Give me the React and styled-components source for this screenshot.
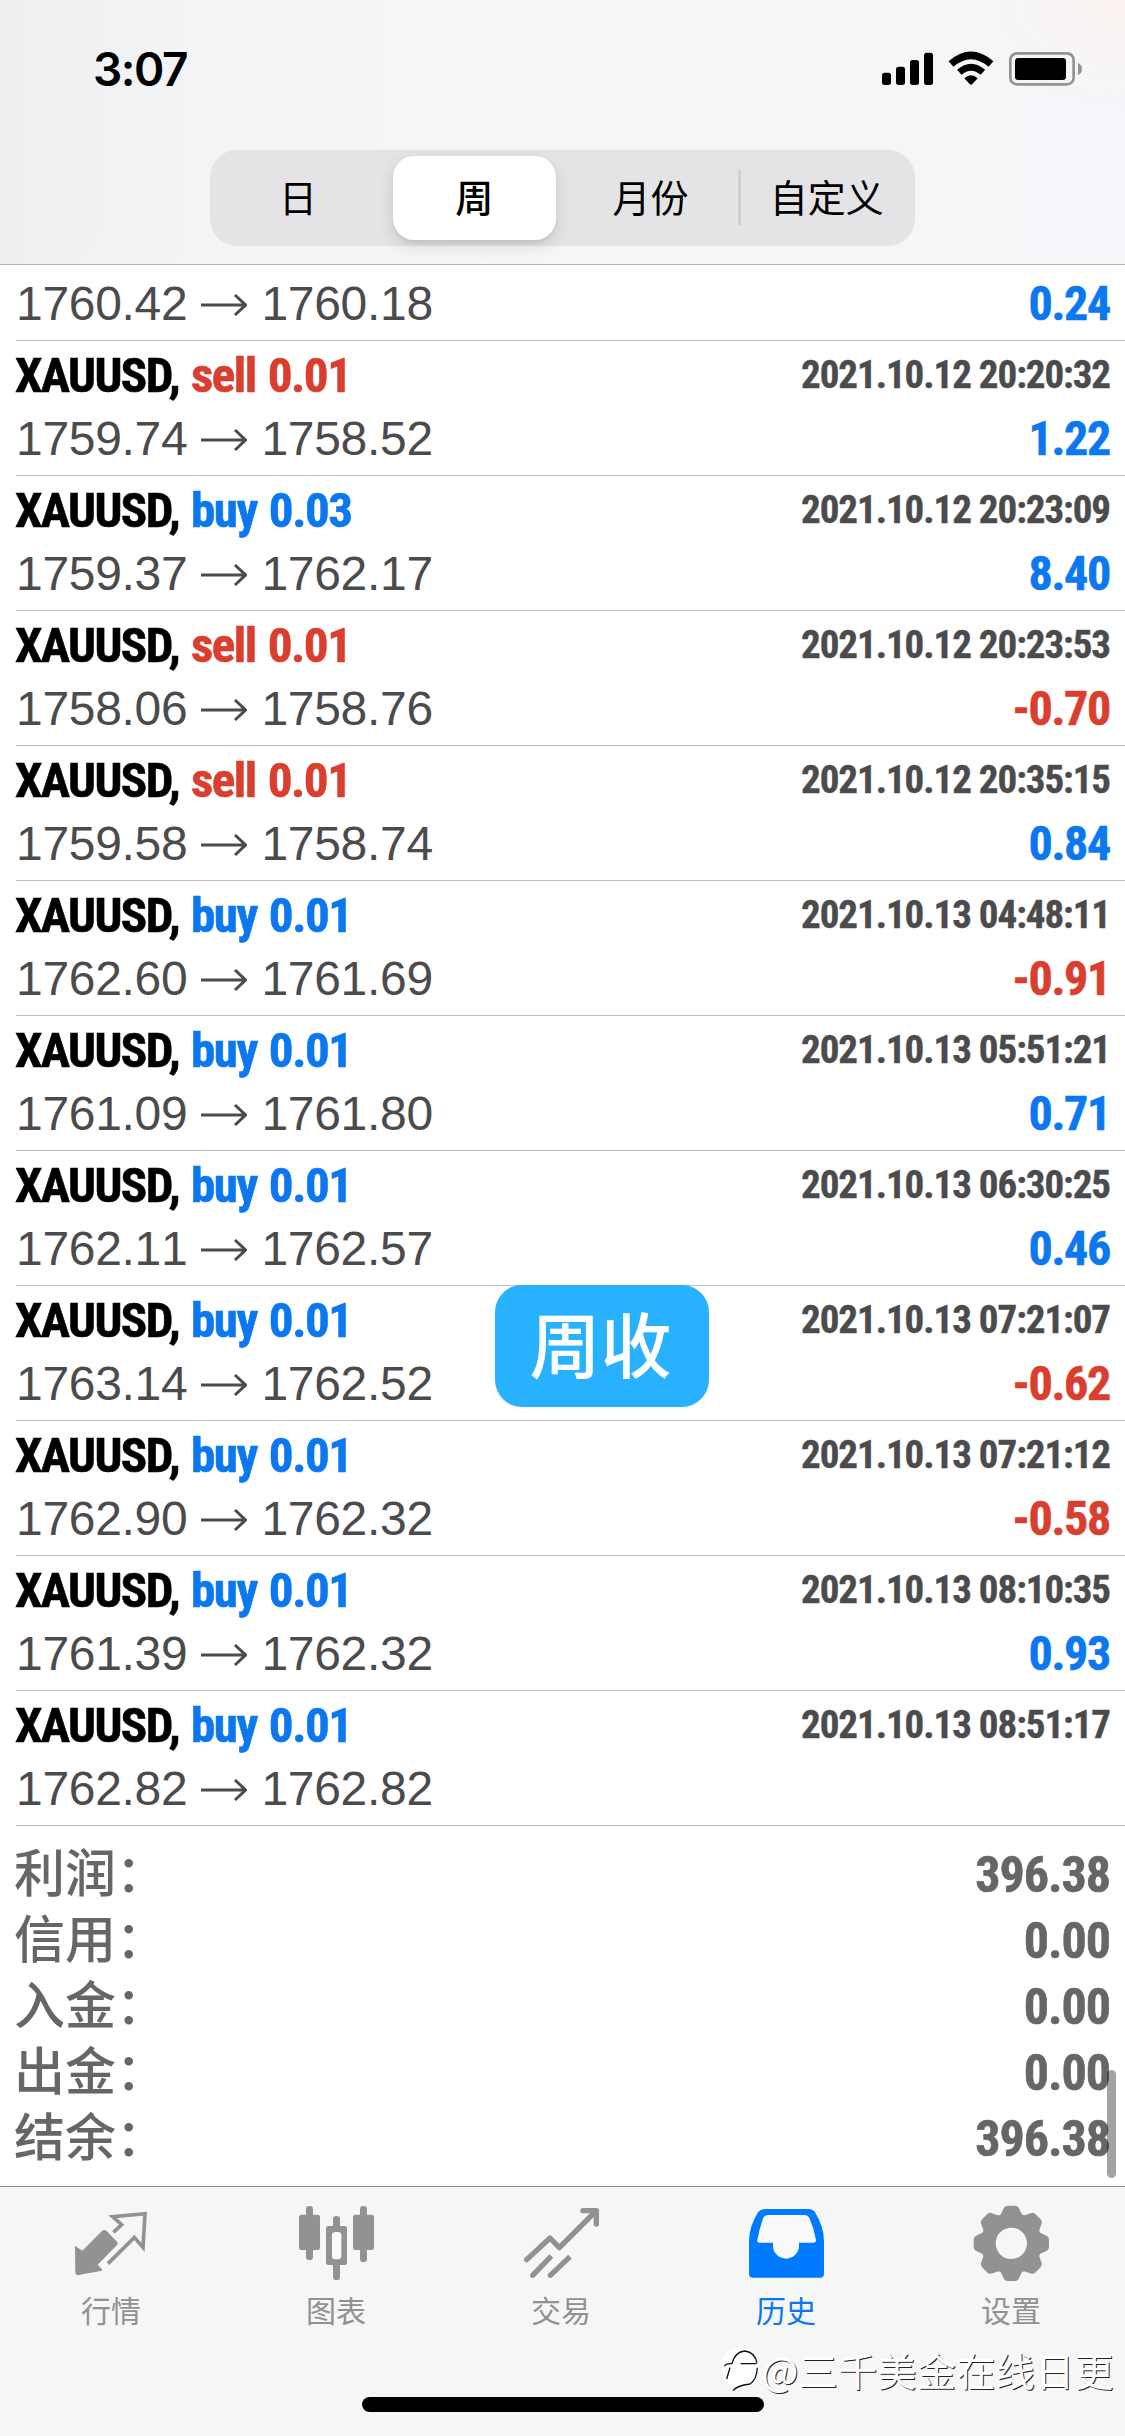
import React from 'react';
import styled, { createGlobalStyle } from 'styled-components';

const cjk = '"Noto Sans CJK SC", sans-serif';
const narrow = '"Roboto Condensed", Roboto, "Noto Sans CJK SC", sans-serif';
const colors = { blue: '#0b78f0', red: '#d93e2e', ink: '#4b4b4e' };

const GlobalStyle = createGlobalStyle`
  html, body { margin: 0; padding: 0; background: #fff; }
  * { box-sizing: border-box; }
`;

const Screen = styled.div`
  position: relative;
  width: 1125px;
  height: 2436px;
  overflow: hidden;
  display: flex;
  flex-direction: column;
  background: #fff;
  font-family: ${cjk};
  white-space: nowrap;
`;

const Header = styled.header`
  height: 265px;
  flex: none;
  display: flex;
  flex-direction: column;
  align-items: center;
  border-bottom: 1px solid #b2b2b4;
  background:
    radial-gradient(ellipse 160px 110px at 100% 0, #fbf3f1, rgba(251, 243, 241, 0)),
    radial-gradient(ellipse 220px 60px at 25% 100%, #f7f3f3, rgba(247, 243, 243, 0)),
    linear-gradient(90deg, #efeff0 0, #f3f4f6 17%, #f5f6f8 35%, #f6f6f7 60%, #f5f6f9 100%);
`;

const StatusBar = styled.div`
  align-self: stretch;
  height: 150px;
  padding: 50px 41px 0 93px;
  display: flex;
  justify-content: space-between;
  align-items: flex-start;
`;

const Time = styled.span`
  font: 600 46px/38px Inter, sans-serif;
  letter-spacing: -1.5px;
  color: #000;
`;

const Segments = styled.nav`
  width: 705px;
  height: 96px;
  padding: 6px 0;
  display: grid;
  grid-template-columns: repeat(4, 1fr);
  border-radius: 27px;
  background: #e4e4e6;
`;

const Segment = styled.button`
  position: relative;
  margin: 0 7px;
  padding: 0 0 4px;
  border: 0;
  border-radius: 21px;
  background: ${(p) => (p.$active ? '#fff' : 'transparent')};
  box-shadow: ${(p) => (p.$active ? '0 6px 16px rgba(0,0,0,.12), 0 3px 3px rgba(0,0,0,.05)' : 'none')};
  font: ${(p) => (p.$active ? 500 : 400)} 38px/80px ${cjk};
  color: #000;

  &::after {
    content: '';
    display: ${(p) => (p.$divider ? 'block' : 'none')};
    position: absolute;
    right: -9px;
    top: 14px;
    width: 3px;
    height: 55px;
    background: #d0d0d3;
  }
`;

const List = styled.main`
  flex: 1;
  position: relative;
`;

const Row = styled.section`
  margin-left: 16px;
  padding: ${(p) => (p.$cut ? '10px' : '0')} 15px 7px 0;
  border-bottom: 1px solid #bfbfc2;
`;

const Line = styled.div`
  display: flex;
  justify-content: space-between;
  align-items: flex-start;
  height: ${(p) => p.$h}px;
`;

const Symbol = styled.span`
  margin-left: -1px;
  font: 700 49px/69px ${narrow};
  letter-spacing: -1.6px;
  word-spacing: 2px;
  color: #000;
  -webkit-text-stroke: 0.6px currentColor;
`;

const Side = styled.span`
  letter-spacing: -1.4px;
  color: ${(p) => colors[p.$tone]};
`;

const Stamp = styled.time`
  font: 700 39px/68px ${narrow};
  letter-spacing: -1.05px;
  color: ${colors.ink};
  -webkit-text-stroke: 0.4px currentColor;
`;

const Prices = styled.span`
  display: flex;
  align-items: center;
  gap: 14px;
  font: 400 48px/58px "Liberation Sans", Arial, sans-serif;
  font-kerning: none;
  letter-spacing: -0.3px;
  color: ${colors.ink};
`;

const Profit = styled.span`
  font: 700 48px/58px ${narrow};
  letter-spacing: -1.3px;
  color: ${(p) => colors[p.$tone]};
  -webkit-text-stroke: 0.6px currentColor;
`;

const Summary = styled.dl`
  margin: 0;
  padding: 16px 15px 0 14px;
`;

const SummaryRow = styled.div`
  height: 66px;
  display: flex;
  justify-content: space-between;
`;

const Label = styled.dt`
  font: 500 51px/66px "Liberation Sans", ${cjk};
  color: #666;
`;

const Value = styled.dd`
  margin: 0;
  font: 700 50px/66px ${narrow};
  letter-spacing: -1px;
  color: #666;
  -webkit-text-stroke: 0.6px currentColor;
`;

const ScrollThumb = styled.div`
  position: absolute;
  right: 9px;
  bottom: 8px;
  width: 9px;
  height: 108px;
  border-radius: 5px;
  background: rgba(0, 0, 0, 0.36);
`;

const Badge = styled.div`
  position: absolute;
  left: 495px;
  top: 1285px;
  width: 214px;
  height: 122px;
  padding-right: 3px;
  border-radius: 27px;
  background: #27b1fe;
  color: #fff;
  font: 500 71px/113px ${cjk};
  text-align: center;
`;

const TabBar = styled.footer`
  height: 250px;
  flex: none;
  padding-right: 3px;
  margin-left: -1.5px;
  border-top: 1px solid #8e8e8e;
  background: #f6f6f6;
  display: grid;
  grid-template-columns: repeat(5, 225px);
`;

const Tab = styled.a`
  padding-top: 13px;
  display: flex;
  flex-direction: column;
  align-items: center;
  font: 400 30px/40px ${cjk};
  color: ${(p) => (p.$active ? colors.blue : '#919191')};

  svg { display: block; margin-bottom: 7px; }
`;

const HomeIndicator = styled.div`
  position: absolute;
  left: 362px;
  bottom: 24px;
  width: 402px;
  height: 15px;
  border-radius: 8px;
  background: #000;
`;

const Watermark = styled.div`
  position: absolute;
  right: 11px;
  top: 2343px;
  display: flex;
  align-items: flex-start;
  font: 400 39px/52px ${cjk};
  letter-spacing: 0.4px;
  color: #fff;
  text-shadow: 1px 1px 0 #222;
`;

const StatusIcons = () => (
  <svg width="202" height="36.67" viewBox="66 60 606 110">
    <rect x="66" y="128" width="27" height="37" rx="8" />
    <rect x="108" y="110" width="27" height="55" rx="8" />
    <rect x="150" y="90" width="27" height="75" rx="8" />
    <rect x="192" y="68" width="27" height="97" rx="8" />
    <g fill="none" stroke="#000">
      <path d="M273 102 Q333 50 393 102" strokeWidth="22" />
      <path d="M298 127 Q333 96 369 127" strokeWidth="20" />
    </g>
    <path d="M313 145 Q333 126 353 145 L337 162 Q333 166 329 162Z" />
    <rect x="451" y="70" width="190" height="93" rx="20" fill="none" stroke="#939393" strokeWidth="8" />
    <rect x="465" y="84" width="153" height="66" rx="10" />
    <path d="M654 98 Q666 104 666 116 Q666 130 654 135Z" fill="#939393" />
  </svg>
);

const Arrow = () => (
  <svg width="46" height="26" viewBox="0 0 46 26" fill="none" stroke={colors.ink} strokeWidth="3">
    <path d="M0 14H44M34 4L44.500 14L34 24" />
  </svg>
);

const TabIcon = ({ cx, children }) => (
  <svg width="80" height="82" viewBox={`${cx - 120} 60 240 246`} fill="#929292">
    {children}
  </svg>
);

const QuotesIcon = () => (
  <TabIcon cx={333}>
    <path d="M225 197L247 212L306 153Q313 147 320 153L351 185Q356 190 351 195L293 254L306 268V272L236 285Q226 286 226 275Z" />
    <path d="M340 157L365 134L338 110L435 101L429 202L403 172L324 251" fill="none" stroke="#929292" strokeWidth="11" />
  </TabIcon>
);

const ChartIcon = () => (
  <TabIcon cx={1008}>
    <rect x="897" y="104" width="63" height="106" rx="7" />
    <rect x="918" y="78" width="21" height="162" rx="10" />
    <rect x="1059" y="104" width="63" height="106" rx="7" />
    <rect x="1080" y="78" width="21" height="168" rx="10" />
    <rect x="999" y="108" width="21" height="192" rx="10" />
    <rect x="978" y="138" width="63" height="117" rx="7" />
    <rect x="996" y="156" width="28" height="82" rx="10" fill="#fafafa" />
  </TabIcon>
);

const TradeIcon = () => (
  <TabIcon cx={423}>
    <g fill="none" stroke="#929292" strokeWidth="16" strokeLinejoin="round">
      <path d="M320 239L390 174L418 203L528 93" strokeLinecap="round" />
      <path d="M489 92H529V132" strokeLinecap="round" />
      <path d="M338 286L394 228M391 286L450 230" />
    </g>
    <circle cx="338" cy="286" r="8" />
    <circle cx="391" cy="286" r="8" />
  </TabIcon>
);

const HistoryIcon = () => (
  <TabIcon cx={1098}>
    <path
      d="M1040 97H1158L1196 150V194H1140V240H1055V194H1003V150Z"
      fill="#fafafa"
    />
    <path
      fill="#007aff"
      fillRule="evenodd"
      d="M1035 87H1165Q1178 87 1185 97Q1212 140 1212 185V281Q1212 293 1200 293H999Q987 293 987 281V185Q987 140 1014 97Q1022 87 1035 87ZM1045 105H1152Q1162 105 1167 112Q1182 144 1188 180Q1188 188 1180 188H1137V197A39 39 0 0 1 1059 197V188H1018Q1010 188 1012 180Q1018 145 1030 113Q1034 105 1045 105Z"
    />
  </TabIcon>
);

const GearIcon = () => (
  <TabIcon cx={933}>
    <g transform="translate(934 190)">
      <path fillRule="evenodd" d="M-92 0A92 92 0 0 1 92 0A92 92 0 0 1 -92 0ZM-47 0A47 47 0 0 0 47 0A47 47 0 0 0 -47 0Z" />
      {[0, 45, 90, 135, 180, 225, 270, 315].map((a) => (
        <path key={a} transform={`rotate(${a})`} d="M-33 -84L-22 -107Q-18 -113 -11 -113H11Q18 -113 22 -107L33 -84Z" />
      ))}
    </g>
  </TabIcon>
);

const WatermarkLogo = () => (
  <svg width="42" height="48" viewBox="900 510 126 144">
    <path d="M905 580Q905 530 960 525Q1020 530 1018 580Q1015 635 955 645L925 630Q905 615 905 580Z" fill="#fff" />
    <g fill="none" stroke="#111" strokeWidth="4">
      <path d="M914 580Q916 571 936 572Q945 536 975 534Q1005 538 1011 570" />
      <path d="M930 584L920 618M962 572H1010M1012 584Q1010 620 990 633Q950 638 939 653" />
    </g>
  </svg>
);

const trades = [
  ['sell', '0.01', '2021.10.12 20:20:32', '1759.74', '1758.52', '1.22'],
  ['buy', '0.03', '2021.10.12 20:23:09', '1759.37', '1762.17', '8.40'],
  ['sell', '0.01', '2021.10.12 20:23:53', '1758.06', '1758.76', '-0.70'],
  ['sell', '0.01', '2021.10.12 20:35:15', '1759.58', '1758.74', '0.84'],
  ['buy', '0.01', '2021.10.13 04:48:11', '1762.60', '1761.69', '-0.91'],
  ['buy', '0.01', '2021.10.13 05:51:21', '1761.09', '1761.80', '0.71'],
  ['buy', '0.01', '2021.10.13 06:30:25', '1762.11', '1762.57', '0.46'],
  ['buy', '0.01', '2021.10.13 07:21:07', '1763.14', '1762.52', '-0.62'],
  ['buy', '0.01', '2021.10.13 07:21:12', '1762.90', '1762.32', '-0.58'],
  ['buy', '0.01', '2021.10.13 08:10:35', '1761.39', '1762.32', '0.93'],
  ['buy', '0.01', '2021.10.13 08:51:17', '1762.82', '1762.82', ''],
];

const totals = [
  ['利润：', '396.38'],
  ['信用：', '0.00'],
  ['入金：', '0.00'],
  ['出金：', '0.00'],
  ['结余：', '396.38'],
];

const tabs = [
  ['行情', QuotesIcon],
  ['图表', ChartIcon],
  ['交易', TradeIcon],
  ['历史', HistoryIcon],
  ['设置', GearIcon],
];

const PriceLine = ({ from, to, profit }) => (
  <Line $h={58}>
    <Prices>
      <span>{from}</span>
      <Arrow />
      <span>{to}</span>
    </Prices>
    <Profit $tone={profit.startsWith('-') ? 'red' : 'blue'}>{profit}</Profit>
  </Line>
);

export default function App() {
  return (
    <Screen>
      <GlobalStyle />
      <Header>
        <StatusBar>
          <Time>3:07</Time>
          <StatusIcons />
        </StatusBar>
        <Segments>
          <Segment>日</Segment>
          <Segment $active>周</Segment>
          <Segment $divider>月份</Segment>
          <Segment>自定义</Segment>
        </Segments>
      </Header>
      <List>
        <Row $cut>
          <PriceLine from="1760.42" to="1760.18" profit="0.24" />
        </Row>
        {trades.map(([side, lots, time, from, to, profit]) => (
          <Row key={time}>
            <Line $h={69}>
              <Symbol>
                XAUUSD, <Side $tone={side === 'sell' ? 'red' : 'blue'}>{side} {lots}</Side>
              </Symbol>
              <Stamp>{time}</Stamp>
            </Line>
            <PriceLine from={from} to={to} profit={profit} />
          </Row>
        ))}
        <Summary>
          {totals.map(([label, value]) => (
            <SummaryRow key={label}>
              <Label>{label}</Label>
              <Value>{value}</Value>
            </SummaryRow>
          ))}
        </Summary>
        <ScrollThumb />
      </List>
      <TabBar>
        {tabs.map(([label, Icon]) => (
          <Tab key={label} $active={label === '历史'}>
            <Icon />
            {label}
          </Tab>
        ))}
      </TabBar>
      <Badge>周收</Badge>
      <HomeIndicator />
      <Watermark>
        <WatermarkLogo />
        @三千美金在线日更
      </Watermark>
    </Screen>
  );
}
